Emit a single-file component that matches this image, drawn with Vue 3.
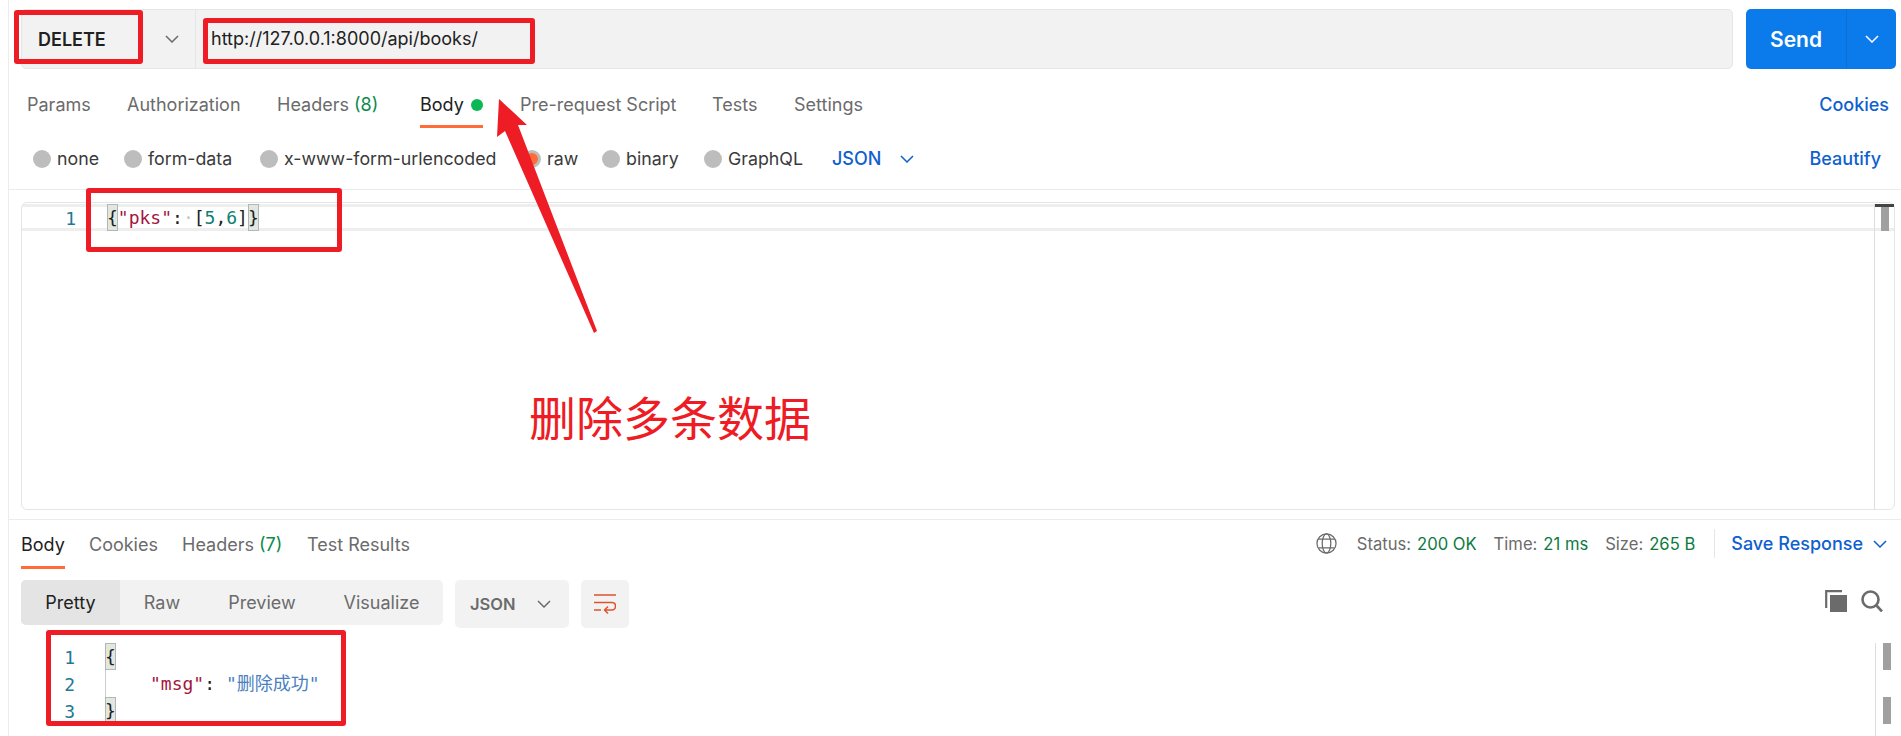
<script setup>
const reqTabs = [
  { label: 'Params', w: 100 },
  { label: 'Authorization', w: 150 },
  { label: 'Headers', count: '(8)', w: 143 },
  { label: 'Body', active: true, dot: true, w: 100 },
  { label: 'Pre-request Script', w: 192 },
  { label: 'Tests', w: 82 },
  { label: 'Settings', w: 90 }
]
const radios = [
  { label: 'none', w: 91 },
  { label: 'form-data', w: 136 },
  { label: 'x-www-form-urlencoded', w: 263 },
  { label: 'raw', on: true, w: 79 },
  { label: 'binary', w: 102 },
  { label: 'GraphQL', w: 128 }
]
const resTabs = [
  { label: 'Body', active: true, w: 68 },
  { label: 'Cookies', w: 93 },
  { label: 'Headers', count: '(7)', w: 125 },
  { label: 'Test Results', w: 110 }
]
const views = [
  { label: 'Pretty', active: true, w: 99 },
  { label: 'Raw', w: 84 },
  { label: 'Preview', w: 116 },
  { label: 'Visualize', w: 123 }
]
const stats = [
  { k: 'Status:', v: '200 OK' },
  { k: 'Time:', v: '21 ms' },
  { k: 'Size:', v: '265 B' }
]
</script>

<template>
  <div class="page">
    <div class="url-row">
      <div class="url-box">
        <div class="method">
          <span class="method-name">DELETE</span>
          <svg class="chev method-chev" viewBox="0 0 14 8"><path d="M1 1l6 6 6-6" /></svg>
        </div>
        <div class="url">http://127.0.0.1:8000/api/books/</div>
      </div>
      <div class="send">
        <span class="send-label">Send</span>
        <span class="send-drop">
          <svg class="chev white" viewBox="0 0 14 8"><path d="M1 1l6 6 6-6" /></svg>
        </span>
      </div>
    </div>

    <div class="req-tabs">
      <div v-for="t in reqTabs" :key="t.label" class="tab" :class="{ active: t.active }" :style="{ width: t.w + 'px' }">
        <span class="tab-inner">
          {{ t.label }}<span v-if="t.count" class="count">&nbsp;{{ t.count }}</span><span v-if="t.dot" class="dot"></span>
        </span>
      </div>
      <span class="link cookies">Cookies</span>
    </div>

    <div class="body-types">
      <div v-for="r in radios" :key="r.label" class="radio" :style="{ width: r.w + 'px' }">
        <span class="circle" :class="{ on: r.on }"></span>
        <span>{{ r.label }}</span>
      </div>
      <span class="link json">JSON</span>
      <svg class="chev blue" viewBox="0 0 14 8"><path d="M1 1l6 6 6-6" /></svg>
      <span class="link beautify">Beautify</span>
    </div>

    <div class="editor">
      <div class="active-line">
        <span class="ln">1</span>
        <span class="code"><span class="match">{</span><span class="str">"pks"</span>:<span class="ws">·</span><span class="pun">[</span><span class="num">5</span>,<span class="num">6</span><span class="pun">]</span><span class="match">}</span></span>
      </div>
      <div class="editor-scroll"><span class="cap"></span><span class="thumb"></span></div>
    </div>

    <div class="res-head">
      <div class="res-tabs">
        <div v-for="t in resTabs" :key="t.label" class="tab res" :class="{ active: t.active }" :style="{ width: t.w + 'px' }">
          <span class="tab-inner">{{ t.label }}<span v-if="t.count" class="count">&nbsp;{{ t.count }}</span></span>
        </div>
      </div>
      <div class="res-meta">
        <svg class="globe" viewBox="0 0 22 22" fill="none" stroke="#6b6b6b" stroke-width="1.3">
          <circle cx="11" cy="11" r="10" />
          <ellipse cx="11" cy="11" rx="4.500" ry="10" />
          <path d="M2.500 6.500h17M2.500 15.500h17" />
        </svg>
        <span v-for="s in stats" :key="s.k" class="stat">{{ s.k }}<span class="val">{{ s.v }}</span></span>
        <span class="meta-div"></span>
        <span class="link save">Save Response</span>
        <svg class="chev blue" viewBox="0 0 14 8"><path d="M1 1l6 6 6-6" /></svg>
      </div>
    </div>

    <div class="toolbar">
      <div class="views">
        <span v-for="v in views" :key="v.label" class="view" :class="{ active: v.active }" :style="{ width: v.w + 'px' }">{{ v.label }}</span>
      </div>
      <div class="format">
        <span>JSON</span>
        <svg class="chev" viewBox="0 0 14 8"><path d="M1 1l6 6 6-6" /></svg>
      </div>
      <div class="wrap">
        <svg viewBox="0 0 22 21" fill="none" stroke="#e0532b" stroke-width="1.5">
          <path d="M0 1h22M0 8.500h18M0 16h7" />
          <path d="M18 8.500c2.500 0 3.500 1.500 3.500 3.700S19.800 16 18 16h-7.500M14 12.500L10.500 16l3.500 3.500" />
        </svg>
      </div>
      <div class="tools">
        <svg class="copy" viewBox="0 0 22 22">
          <path d="M5 5h17v17H5z" fill="#6b6b6b" />
          <path d="M1.200 18V1.200H17" fill="none" stroke="#6b6b6b" stroke-width="2.200" />
        </svg>
        <svg class="search" viewBox="0 0 22 22" fill="none" stroke="#6b6b6b" stroke-width="2.600">
          <circle cx="9.500" cy="9.500" r="8" />
          <path d="M15 15l6 6.500" />
        </svg>
      </div>
    </div>

    <div class="res-code">
      <div class="res-line"><span class="ln res-ln">1</span><span class="code"><span class="match res-match">{</span></span></div>
      <div class="res-line"><span class="ln res-ln">2</span><span class="code guide"><span class="str pad">"msg"</span>: <span class="sval">"删除成功"</span></span></div>
      <div class="res-line"><span class="ln res-ln">3</span><span class="code"><span class="match res-match">}</span></span></div>
      <div class="res-scroll"><span class="thumb2"></span><span class="thumb2"></span></div>
    </div>

    <div class="mark m-method"></div>
    <div class="mark m-url"></div>
    <div class="mark m-pks"></div>
    <div class="mark m-msg"></div>
    <svg class="arrow" viewBox="0 0 1901 736">
      <path d="M499 99L527 125L518 125L597 331L594 333L505 131L497 137Z" fill="#ee1c25" />
    </svg>
    <div class="note">删除多条数据</div>
  </div>
</template>

<style>
html, body { margin: 0; background: #fff; overflow: hidden; }
</style>

<style scoped>
.page {
  position: relative;
  width: 1901px;
  height: 736px;
  overflow: hidden;
  box-sizing: border-box;
  padding-left: 8px;
  font-family: Inter, "Noto Sans CJK SC", sans-serif;
  font-size: 18px;
  color: #6b6b6b;
  background: #fff;
}
.page::before {
  content: "";
  position: absolute;
  left: 8px;
  top: 0;
  bottom: 0;
  width: 1px;
  background: #ececec;
}
.chev { width: 14px; height: 8px; flex: none; fill: none; stroke: #6b6b6b; stroke-width: 1.5; }
.chev.white { stroke: #fff; }
.chev.blue { stroke: #0f5fd0; }

.url-row { display: flex; height: 60px; padding: 9px 5px 0 13px; gap: 13px; }
.url-box {
  flex: 1;
  display: flex;
  box-sizing: border-box;
  background: #f2f2f2;
  border: 1px solid #e6e6e6;
  border-radius: 5px;
}
.method { width: 174px; display: flex; align-items: center; border-right: 1px solid #e6e6e6; box-sizing: border-box; padding-left: 16px; }
.method-name { width: 127px; font-weight: 600; color: #212121; font-size: 18px; }
.url { padding-left: 15px; line-height: 58px; color: #212121; font-size: 18px; }
.send { width: 150px; display: flex; background: #0b7bec; border-radius: 5px; color: #fff; font-weight: 600; font-size: 21px; align-items: stretch; }
.send-label { width: 101px; display: flex; align-items: center; justify-content: center; border-right: 1px solid #0a6fd6; box-sizing: border-box; }
.send-drop { flex: 1; display: flex; align-items: center; justify-content: center; }

.req-tabs { display: flex; height: 59px; padding-left: 19px; padding-right: 12px; align-items: stretch; }
.tab { position: relative; display: flex; align-items: center; font-size: 18px; box-sizing: border-box; padding-top: 12px; }
.tab-inner { position: relative; display: inline-flex; align-items: center; white-space: pre; height: 100%; }
.tab.active .tab-inner { color: #212121; }
.tab.active .tab-inner::after { content: ""; position: absolute; left: 0; right: 0; bottom: 0; height: 3px; background: #ff6c37; }
.count { color: #0c8a4d; }
.dot { width: 12px; height: 12px; border-radius: 50%; background: #0cb855; margin-left: 7px; }
.link { color: #0f5fd0; font-weight: 500; font-size: 18px; }
.cookies { margin-left: auto; align-self: center; padding-top: 12px; }

.body-types { display: flex; align-items: center; height: 62px; padding-left: 25px; padding-right: 20px; border-bottom: 1px solid #ececec; box-sizing: border-box; }
.radio { display: flex; align-items: center; gap: 6px; color: #3a3a3a; font-size: 17.8px; white-space: nowrap; }
.circle { width: 18px; height: 18px; border-radius: 50%; background: #bdbdbd; flex: none; box-sizing: border-box; }
.circle.on { border: 3px solid #bdbdbd; background: #ff6c37; }
.json { margin-left: 0; width: 68px; }
.beautify { margin-left: auto; }

.editor {
  position: relative;
  margin: 12px 6px 0 13px;
  height: 308px;
  box-sizing: border-box;
  border: 1px solid #e5e5e5;
  border-radius: 6px;
}
.active-line {
  display: flex;
  margin-top: 1px;
  height: 27px;
  box-sizing: border-box;
  border-top: 3px solid #eee;
  border-bottom: 3px solid #eee;
  align-items: center;
}
.ln { width: 54px; text-align: right; font-family: "DejaVu Sans Mono", monospace; font-size: 18px; color: #237893; flex: none; padding-top: 2px; }
.code { margin-left: 31px; font-family: "DejaVu Sans Mono", "Noto Sans CJK SC", monospace; font-size: 18px; color: #212121; white-space: pre; line-height: 27px; }
.match { background: #e0e8e0; outline: 1px solid #b5b5b5; outline-offset: -1px; display: inline-block; height: 27px; }
.str { color: #a31540; }
.num { color: #0f7f70; }
.pun { color: #212121; }
.ws { color: #c4c4c4; }
.sval { color: #4a7fc0; }
.editor-scroll {
  position: absolute;
  right: 0;
  top: 1px;
  bottom: 0;
  width: 20px;
  border-left: 1px solid #ddd;
  box-sizing: border-box;
}
.cap { position: absolute; left: 0; right: 0; top: 0; height: 3px; background: #444; }
.thumb { position: absolute; left: 6px; top: 3px; width: 8px; height: 24px; background: #a0a0a0; }

.res-head {
  margin-top: 9px;
  border-top: 1px solid #ececec;
  height: 50px;
  display: flex;
  padding: 0 14px 0 13px;
  justify-content: space-between;
  box-sizing: border-box;
}
.res-tabs { display: flex; align-items: stretch; height: 49px; }
.tab.res { padding-top: 0; }
.tab.res .tab-inner { padding-top: 0; height: 49px; }
.res-meta { display: flex; align-items: center; height: 47px; font-size: 16.6px; white-space: nowrap; }
.globe { width: 21px; height: 21px; margin-right: 20px; }
.stat { margin-right: 17px; }
.val { color: #0c7a3f; margin-left: 6px; }
.meta-div { width: 1px; height: 29px; background: #e6e6e6; margin: 0 16px 0 2px; }
.save { margin-right: 10px; }

.toolbar { display: flex; margin: 11px 18px 0 13px; height: 48px; align-items: flex-start; }
.views { display: flex; background: #f2f2f2; border-radius: 5px; height: 45px; overflow: hidden; width: 422px; }
.view { display: flex; align-items: center; justify-content: center; font-size: 18px; }
.view.active { background: #e4e4e4; color: #212121; }
.format { margin-left: 12px; width: 114px; height: 48px; background: #f2f2f2; border-radius: 5px; display: flex; align-items: center; gap: 21px; box-sizing: border-box; padding-left: 15px; font-weight: 600; font-size: 16.5px; }
.wrap { margin-left: 12px; width: 48px; height: 48px; background: #f2f2f2; border-radius: 5px; display: flex; align-items: center; justify-content: center; }
.wrap svg { width: 22px; height: 21px; }
.tools { margin-left: auto; display: flex; gap: 14px; padding-top: 10px; }
.copy, .search { width: 22px; height: 22px; }

.res-code { position: relative; margin-top: 15px; height: 110px; }
.res-line { display: flex; height: 27px; align-items: center; }
.res-ln { width: 67px; }
.res-line .code { margin-left: 30px; }
.res-match { height: 27px; }
.guide { border-left: 1px solid #ccc; height: 27px; }
.pad { margin-left: 44px; }
.res-scroll { position: absolute; right: 0; top: 0; width: 26px; height: 100%; border-left: 1px solid #ddd; box-sizing: border-box; }
.thumb2 { display: block; width: 8px; height: 27px; margin: 0 0 0 7px; background: #a0a0a0; }
.thumb2 + .thumb2 { margin-top: 0; position: absolute; top: 54px; }

.mark { position: absolute; box-sizing: border-box; border: 5px solid #ee1c25; border-radius: 3px; pointer-events: none; }
.m-method { left: 14px; top: 10px; width: 129px; height: 54px; }
.m-url { left: 203px; top: 18px; width: 332px; height: 46px; }
.m-pks { left: 86px; top: 188px; width: 256px; height: 64px; }
.m-msg { left: 46px; top: 630px; width: 300px; height: 96px; }
.arrow { position: absolute; left: 0; top: 0; width: 1901px; height: 736px; pointer-events: none; }
.note { position: absolute; left: 529px; top: 382px; font-family: "Noto Sans CJK SC", sans-serif; font-size: 47px; line-height: 68px; color: #ee1c25; white-space: nowrap; }
</style>
